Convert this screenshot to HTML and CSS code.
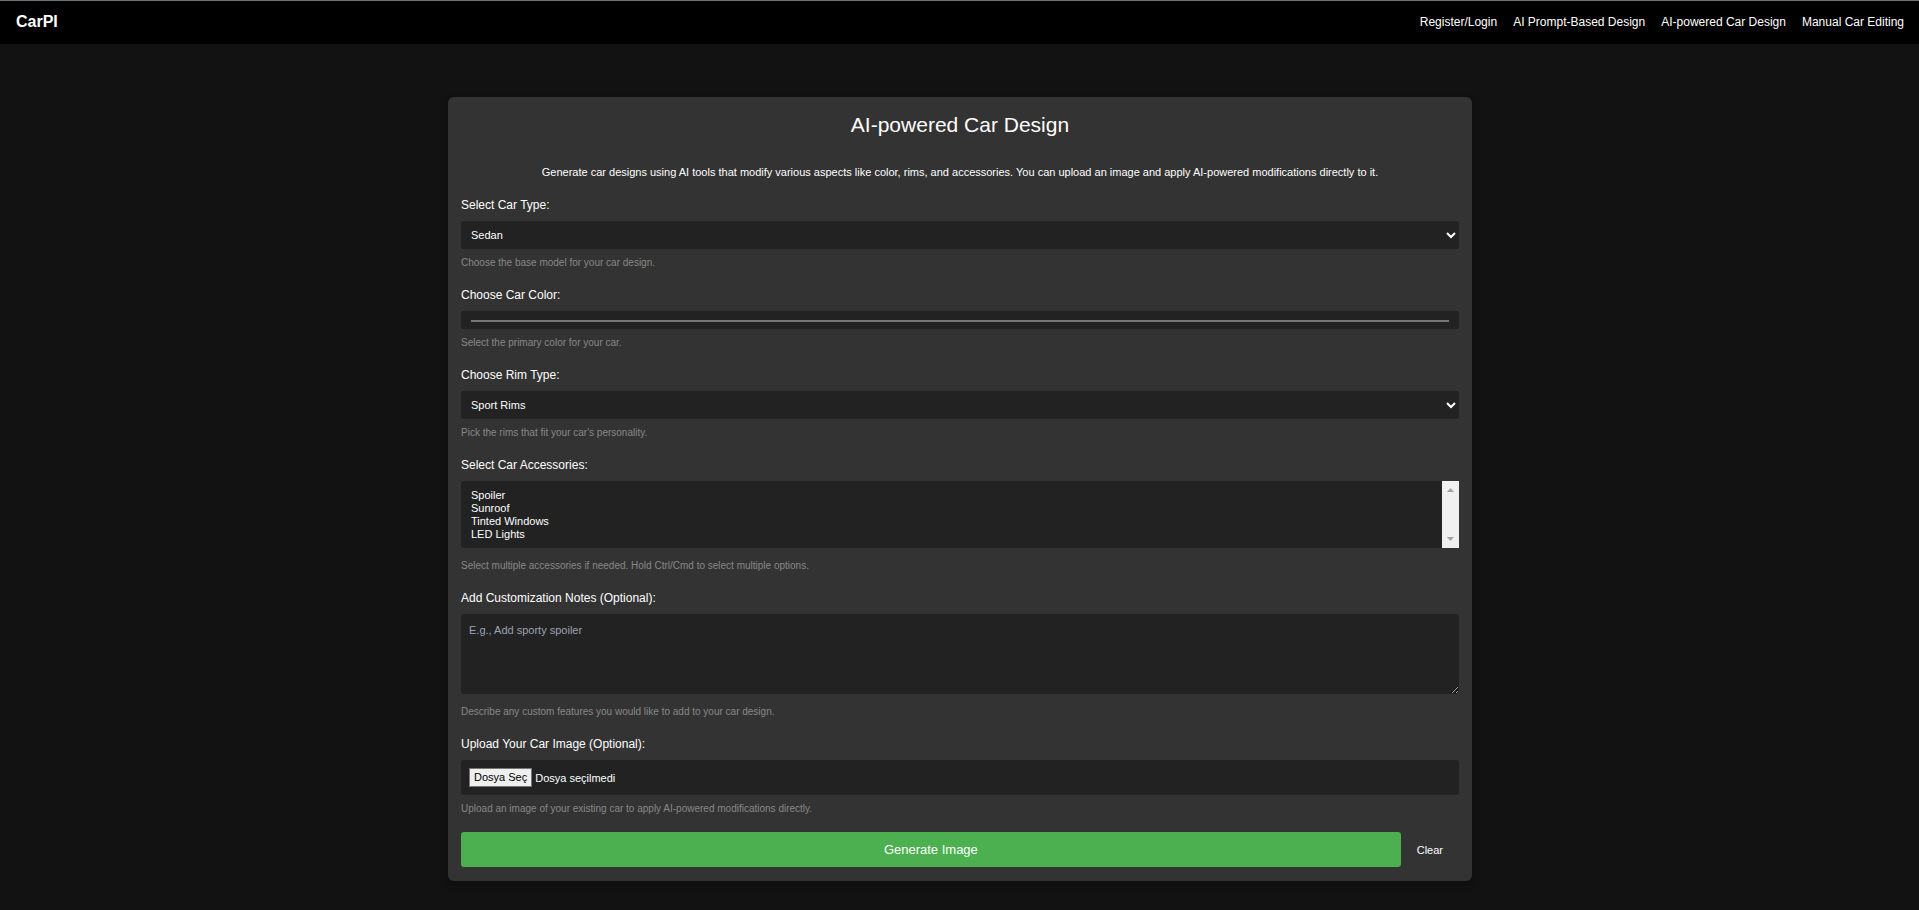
FILE: index.html
```html
<!DOCTYPE html>
<html lang="en">
<head>
  <meta charset="utf-8">
  <meta name="viewport" content="width=device-width, initial-scale=1">
  <title>AI-powered Car Design</title>
  <link rel="stylesheet" href="styles.css">
</head>
<body>
  <header class="navbar">
    <a class="logo" href="#">CarPI</a>
    <nav class="nav-links" aria-label="Main">
      <a href="#">Register/Login</a>
      <a href="#">AI Prompt-Based Design</a>
      <a href="#">AI-powered Car Design</a>
      <a href="#">Manual Car Editing</a>
    </nav>
  </header>

  <main class="page">
    <form class="card">
      <h1 class="title">AI-powered Car Design</h1>
      <p class="intro">Generate car designs using AI tools that modify various aspects like color, rims, and accessories. You can upload an image and apply AI-powered modifications directly to it.</p>

      <div class="field">
        <label class="label" for="car-type">Select Car Type:</label>
        <select class="control select" id="car-type">
          <option>Sedan</option>
          <option>SUV</option>
          <option>Coupe</option>
        </select>
        <p class="help">Choose the base model for your car design.</p>
      </div>

      <div class="field">
        <label class="label" for="car-color">Choose Car Color:</label>
        <input class="control color" id="car-color" type="color" value="#777777">
        <p class="help">Select the primary color for your car.</p>
      </div>

      <div class="field">
        <label class="label" for="rim-type">Choose Rim Type:</label>
        <select class="control select" id="rim-type">
          <option>Sport Rims</option>
          <option>Classic Rims</option>
        </select>
        <p class="help">Pick the rims that fit your car's personality.</p>
      </div>

      <div class="field">
        <label class="label" for="accessories">Select Car Accessories:</label>
        <div class="listbox-wrap">
          <select class="control listbox" id="accessories" multiple size="4">
            <option>Spoiler</option>
            <option>Sunroof</option>
            <option>Tinted Windows</option>
            <option>LED Lights</option>
          </select>
          <div class="scrollbar" aria-hidden="true">
            <svg width="7" height="4" viewBox="0 0 7 4"><path d="M0 4L3.500 0L7 4z" fill="#a3a3a3"/></svg>
            <svg width="7" height="4" viewBox="0 0 7 4"><path d="M0 0L3.500 4L7 0z" fill="#a3a3a3"/></svg>
          </div>
        </div>
        <p class="help help-loose">Select multiple accessories if needed. Hold Ctrl/Cmd to select multiple options.</p>
      </div>

      <div class="field">
        <label class="label" for="notes">Add Customization Notes (Optional):</label>
        <textarea class="control notes" id="notes" placeholder="E.g., Add sporty spoiler"></textarea>
        <p class="help help-loose">Describe any custom features you would like to add to your car design.</p>
      </div>

      <div class="field">
        <label class="label" for="car-image">Upload Your Car Image (Optional):</label>
        <div class="control upload">
          <input class="upload-input" id="car-image" type="file" accept="image/*">
          <label class="upload-button" for="car-image">Dosya Seç</label>
          <span class="upload-name">Dosya seçilmedi</span>
        </div>
        <p class="help">Upload an image of your existing car to apply AI-powered modifications directly.</p>
      </div>

      <div class="actions">
        <button class="generate" type="button">Generate Image</button>
        <button class="clear" type="reset">Clear</button>
      </div>
    </form>
  </main>
</body>
</html>
```
FILE: styles.css
```css
*,
*::before,
*::after {
  box-sizing: border-box;
}

body {
  margin: 0;
  background: #121212;
  color: #fff;
  font-family: "Liberation Sans", Arial, sans-serif;
  font-size: 11px;
  line-height: 16px;
}

h1,
p {
  margin: 0;
}

a {
  color: inherit;
  text-decoration: none;
}

button,
input,
select,
textarea {
  margin: 0;
  font: inherit;
  color: inherit;
}

.navbar {
  display: flex;
  align-items: center;
  justify-content: space-between;
  padding: 9px 15px 10px 16px;
  border-top: 1px solid #6b7476;
  background: #000;
}

.logo {
  font-size: 16px;
  font-weight: bold;
  line-height: 24px;
}

.nav-links {
  display: flex;
  gap: 16px;
  font-size: 12px;
}

.page {
  padding: 53px 15px 24px 16px;
}

.card {
  max-width: 1024px;
  margin: 0 auto;
  padding: 13px 13px 14px;
  border-radius: 6px;
  background: #333;
  box-shadow: 0 4px 8px rgba(0, 0, 0, 0.2);
}

.title {
  margin-bottom: 24px;
  font-size: 21px;
  font-weight: normal;
  line-height: 30px;
  text-align: center;
}

.intro {
  margin-bottom: 16px;
  text-align: center;
}

.field {
  margin-bottom: 17px;
}

.label {
  display: block;
  margin-bottom: 7px;
  font-size: 12px;
  line-height: 18px;
}

.control {
  display: block;
  width: 100%;
  border: 0;
  border-radius: 3px;
  background-color: #222;
}

.help {
  margin-top: 8px;
  color: #888;
  font-size: 10px;
  line-height: 12px;
}

.help-loose {
  margin-top: 12px;
}

.select {
  height: 28px;
  padding: 0 6px;
}

.color {
  height: 18px;
  padding: 9px 10px 7px;
}

.color::-webkit-color-swatch-wrapper {
  padding: 0;
}

.color::-webkit-color-swatch {
  border: 1px solid #777;
  border-radius: 0;
}

.listbox-wrap {
  position: relative;
}

.listbox {
  height: 67px;
  padding: 8px;
  overflow-y: scroll;
  scrollbar-width: none;
}

.listbox option {
  min-height: 13px;
  padding: 0 2px;
  line-height: 13px;
}

.scrollbar {
  position: absolute;
  top: 0;
  right: 0;
  bottom: 0;
  display: flex;
  flex-direction: column;
  align-items: center;
  justify-content: space-between;
  width: 17px;
  padding: 7px 0;
  background: #f0f0f0;
}

.notes {
  height: 80px;
  padding: 8px;
  resize: vertical;
}

.notes::placeholder {
  color: #9ca3af;
}

.upload {
  display: flex;
  align-items: center;
  gap: 3px;
  padding: 8px;
}

.upload-input {
  position: absolute;
  width: 1px;
  height: 1px;
  opacity: 0;
}

.upload-button {
  padding: 0 4px;
  border: 1px solid #767676;
  background: #efefef;
  color: #000;
  line-height: 17px;
}

.actions {
  display: flex;
}

.generate,
.clear {
  border: 0;
  border-radius: 3px;
  background: transparent;
  cursor: pointer;
}

.generate {
  flex: 1;
  padding: 9px 16px;
  background: #4caf50;
  font-size: 13px;
  line-height: 17px;
}

.clear {
  padding: 9px 16px;
}
```
